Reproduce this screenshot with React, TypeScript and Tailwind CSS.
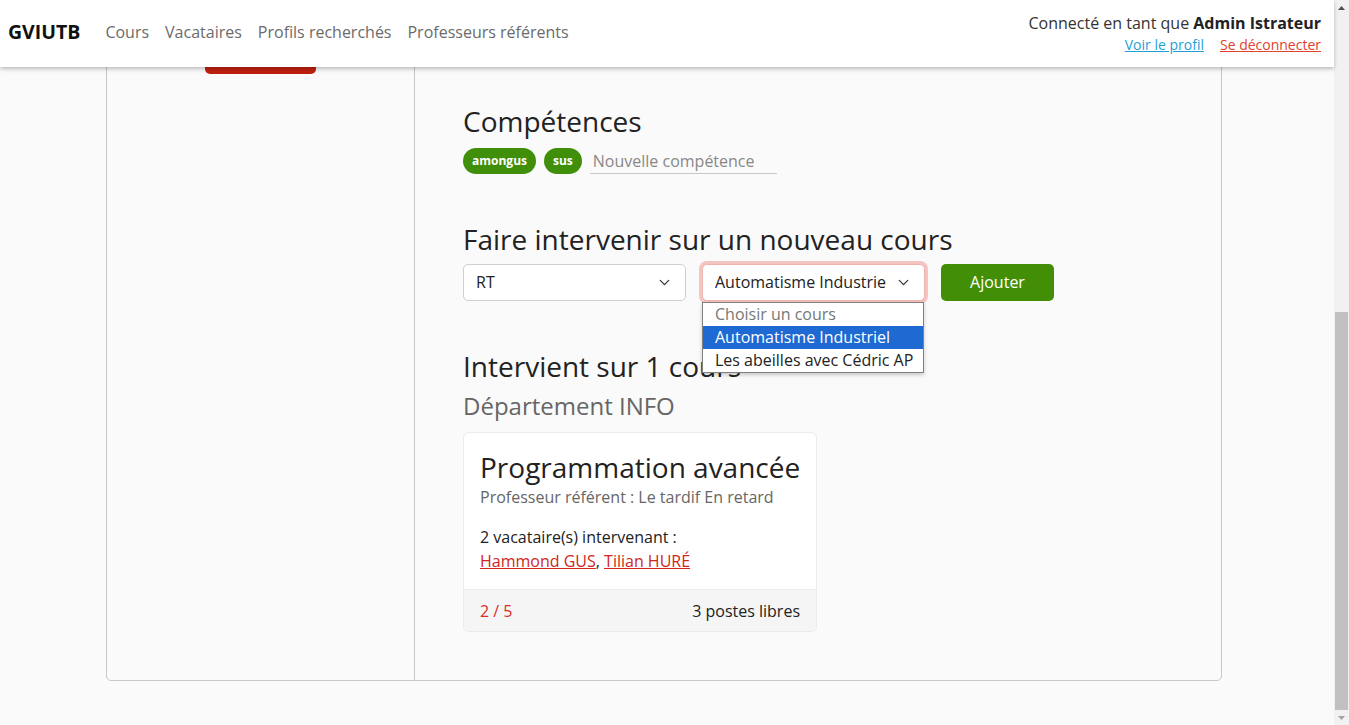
import { ChevronDown } from "lucide-react";

const font = { fontFamily: '"Open Sans", "Noto Sans", sans-serif' };

function Header() {
  return (
    <header className="relative z-20 h-[67px] shrink-0 bg-white shadow-[0_2px_4px_rgba(0,0,0,0.25)] flex items-center justify-between pl-2 pr-[13px]">
      <div className="flex items-center -mt-[3px]">
        <span className="text-[19.5px] font-bold text-[#111] mr-[25px]">GVIUTB</span>
        <nav className="flex items-center gap-4 text-[16px] text-[#6b6b6b]">
          <a>Cours</a>
          <a>Vacataires</a>
          <a>Profils recherchés</a>
          <a>Professeurs référents</a>
        </nav>
      </div>
      <div className="flex flex-col items-end -mt-[2px]">
        <div className="text-[16px] leading-[24px] text-[#333]">
          Connecté en tant que <span className="font-bold text-[#222]">Admin Istrateur</span>
        </div>
        <div className="flex gap-4 text-[14px] leading-[20px]">
          <a className="underline text-[#1e9fd6]">Voir le profil</a>
          <a className="underline text-[#e2412c]">Se déconnecter</a>
        </div>
      </div>
    </header>
  );
}

function LeftColumn() {
  return (
    <div className="w-[308px] shrink-0 border-r border-[#c8c8c8] flex flex-col items-center pt-12">
      <div className="w-40 h-40 rounded-full bg-[#e2e2e2]" />
      <div className="mt-4 text-[24px] leading-[29px] text-[#222]">Hammond GUS</div>
      <div className="mt-1 text-[14px] leading-[20px] text-[#666]">hammond.gus@exemple.fr</div>
      <div className="mt-6 text-[16px] leading-[24px] text-[#555] text-center">
        <div>Vacataire</div>
        <div>Statut : actif</div>
        <div>Téléphone : 06 00 00 00 00</div>
        <div>Inscrit en 2023</div>
      </div>
      <button className="mt-6 w-[111px] h-[38px] rounded-[5px] bg-[#e6e6e6] text-[#333] text-[16px]">Modifier</button>
      <button className="mt-[17px] w-[111px] h-[39px] rounded-[5px] bg-[#c0200f] text-white text-[16px]">Supprimer</button>
    </div>
  );
}

function Profile() {
  return (
    <div className="h-[450px]">
      <h2 className="text-[28px] leading-[1.2] text-[#222]">Informations</h2>
      <div className="mt-4 flex flex-col text-[16px] text-[#444]">
        {["Nom : GUS", "Prénom : Hammond", "Email : hammond.gus@exemple.fr", "Téléphone : 06 00 00 00 00", "Entreprise : Indépendant", "Adresse : 12 rue des Lilas"].map((t) => (
          <div key={t} className="h-[40px] flex items-center border-b border-[#eee]">{t}</div>
        ))}
      </div>
    </div>
  );
}

function Skills() {
  return (
    <section className="mt-12">
      <h2 className="text-[28px] leading-[1.2] text-[#222]">Compétences</h2>
      <div className="mt-[9px] flex items-center gap-2">
        <span className="h-[26px] px-[9px] rounded-full bg-[#3f8f0a] text-white text-[12px] font-bold flex items-center">amongus</span>
        <span className="h-[26px] px-[9px] rounded-full bg-[#3f8f0a] text-white text-[12px] font-bold flex items-center">sus</span>
        <input
          placeholder="Nouvelle compétence"
          className="w-[187px] h-[26px] px-[3px] bg-transparent border-b border-[#c8c8c8] text-[16px] outline-none placeholder:text-[#888]"
          style={font}
        />
      </div>
    </section>
  );
}

function NewCourse() {
  const options = ["Choisir un cours", "Automatisme Industriel", "Les abeilles avec Cédric AP"];
  return (
    <section className="mt-[49px]">
      <h2 className="text-[28px] leading-[1.2] text-[#222]">Faire intervenir sur un nouveau cours</h2>
      <div className="mt-[7px] flex items-center gap-4">
        <div className="w-[223px] h-[37px] rounded-[5px] border border-[#cfcfcf] bg-white flex items-center justify-between pl-3 pr-3 text-[16px] text-[#222]">
          <span>RT</span>
          <ChevronDown size={17} strokeWidth={1.8} className="text-[#333]" />
        </div>
        <div className="relative">
          <div className="w-[223px] h-[37px] rounded-[5px] border border-[#f0b4b0] ring-[3px] ring-[#f4c4c0] bg-white flex items-center pl-3 pr-3 text-[16px] text-[#222]">
            <span className="flex-1 overflow-hidden whitespace-nowrap">Automatisme Industriel</span>
            <ChevronDown size={17} strokeWidth={1.8} className="ml-2 shrink-0 text-[#333]" />
          </div>
          <div className="absolute left-0 top-[38px] z-10 w-[222px] bg-white border border-[#808080] shadow-[0_2px_4px_rgba(0,0,0,0.2)]">
            {options.map((o, i) => (
              <div
                key={o}
                className={`h-[23px] leading-[23px] pl-3 text-[16px] whitespace-nowrap ${
                  i === 0 ? "text-[#777]" : i === 1 ? "bg-[#1e69d2] text-white" : "text-[#222]"
                }`}
              >
                {o}
              </div>
            ))}
          </div>
        </div>
        <button className="w-[113px] h-[37px] rounded-[5px] bg-[#428f07] text-white text-[16px]">Ajouter</button>
      </div>
    </section>
  );
}

function Courses() {
  return (
    <section className="mt-[49px]">
      <h2 className="text-[28px] leading-[1.2] text-[#222]">Intervient sur 1 cours</h2>
      <h3 className="mt-[9px] text-[24px] leading-[1.2] text-[#666]">Département INFO</h3>
      <div className="mt-[11px] w-[354px] rounded-[6px] border border-[#ebebeb] bg-white overflow-hidden">
        <div className="p-4">
          <div className="text-[28px] leading-[36px] text-[#222] whitespace-nowrap">Programmation avancée</div>
          <div className="text-[16px] leading-[24px] text-[#666]">Professeur référent : Le tardif En retard</div>
          <div className="mt-4 text-[16px] leading-[24px] text-[#222]">2 vacataire(s) intervenant :</div>
          <div className="text-[16px] leading-[24px] text-[#222]">
            <a className="underline text-[#d0261c]">Hammond GUS</a>, <a className="underline text-[#d0261c]">Tilian HURÉ</a>
          </div>
        </div>
        <div className="h-[42px] px-4 flex items-center justify-between bg-[#f5f5f5] border-t border-[#ececec] text-[16px]">
          <span className="text-[#d9302a]">2 / 5</span>
          <span className="text-[#222]">3 postes libres</span>
        </div>
      </div>
    </section>
  );
}

function Scrollbar() {
  return (
    <div className="w-[15px] shrink-0 bg-[#f1f1f1] flex flex-col items-center">
      <div className="h-[15px] flex items-center justify-center">
        <svg width="7" height="4" viewBox="0 0 7 4"><path d="M0 4 L3.5 0 L7 4 Z" fill="#505050" /></svg>
      </div>
      <div className="flex-1 w-full flex flex-col justify-end px-[1px]">
        <div className="h-[398px] bg-[#c1c1c1]" />
      </div>
      <div className="h-[15px] flex items-center justify-center">
        <svg width="7" height="4" viewBox="0 0 7 4"><path d="M0 0 L7 0 L3.5 4 Z" fill="#a3a3a3" /></svg>
      </div>
    </div>
  );
}

export default function App() {
  return (
    <div className="h-screen flex overflow-hidden bg-[#fafafa]" style={font}>
      <div className="flex-1 min-w-0 flex flex-col">
        <Header />
        <main className="flex-1 min-h-0 overflow-hidden flex flex-col justify-end pb-[44px] pl-[106px]">
          <div className="w-[1116px] shrink-0 flex rounded-[5px] border border-[#c8c8c8] bg-[#fafafa]">
            <LeftColumn />
            <div className="flex-1 px-12 pt-12 pb-12">
              <Profile />
              <Skills />
              <NewCourse />
              <Courses />
            </div>
          </div>
        </main>
      </div>
      <Scrollbar />
    </div>
  );
}
